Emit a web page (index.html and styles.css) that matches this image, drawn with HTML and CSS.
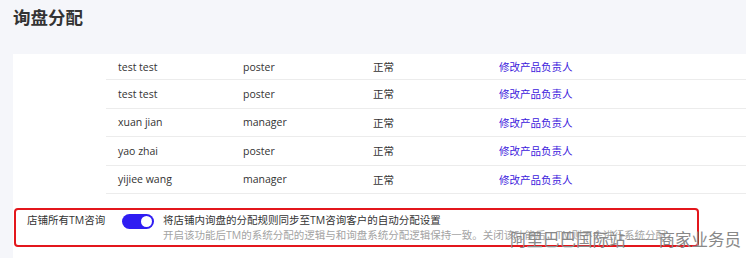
FILE: index.html
```html
<!DOCTYPE html>
<html lang="zh">
  <head>
    <meta charset="UTF-8" />
    <meta name="viewport" content="width=device-width, initial-scale=1.0" />
    <title>询盘分配</title>
    <link rel="stylesheet" href="styles.css">
  </head>
  <body>
    <div class="page">
      <h1 class="title">询盘分配</h1>
      <div class="card">
        <div class="table">
          <div class="row">
            <div class="c-name">test test</div>
            <div class="c-role">poster</div>
            <div class="c-status">正常</div>
            <div class="c-op"><a href="#">修改产品负责人</a></div>
          </div>
          <div class="row">
            <div class="c-name">test test</div>
            <div class="c-role">poster</div>
            <div class="c-status">正常</div>
            <div class="c-op"><a href="#">修改产品负责人</a></div>
          </div>
          <div class="row">
            <div class="c-name">xuan jian</div>
            <div class="c-role">manager</div>
            <div class="c-status">正常</div>
            <div class="c-op"><a href="#">修改产品负责人</a></div>
          </div>
          <div class="row">
            <div class="c-name">yao zhai</div>
            <div class="c-role">poster</div>
            <div class="c-status">正常</div>
            <div class="c-op"><a href="#">修改产品负责人</a></div>
          </div>
          <div class="row">
            <div class="c-name">yijiee wang</div>
            <div class="c-role">manager</div>
            <div class="c-status">正常</div>
            <div class="c-op"><a href="#">修改产品负责人</a></div>
          </div>
        </div>

        <div class="setting">
          <div class="setting-label">店铺所有TM咨询</div>
          <span class="switch on"><i></i></span>
          <div class="setting-text">
            <div class="main-line">将店铺内询盘的分配规则同步至TM咨询客户的自动分配设置</div>
            <div class="tip">开启该功能后TM的系统分配的逻辑与和询盘系统分配逻辑保持一致。关闭该功能后，TM则不会进行系统分配。</div>
          </div>
        </div>
      </div>
    </div>
    <div class="watermark">阿里巴巴国际站——商家业务员</div>
  </body>
</html>
```

FILE: styles.css
```css
* {
  margin: 0;
  padding: 0;
  box-sizing: border-box;
}
body {
  background: #f5f6fa;
  font-family: "Open Sans", "Noto Sans CJK SC", sans-serif;
  font-size: 10.5px;
  color: #333;
  height: 258px;
  overflow: hidden;
  position: relative;
}
.page {
  padding-left: 13px;
}
.title {
  height: 54px;
  padding-top: 4px;
  font-size: 17.5px;
  line-height: 25px;
  font-weight: bold;
  color: #333;
  font-family: "Noto Sans CJK SC", sans-serif;
}
.card {
  background: #fff;
  height: 204px;
}
.table {
  margin-left: 93px;
}
.row {
  display: flex;
  align-items: center;
  height: 28.5px;
  border-bottom: 1px solid #ececec;
}
.row:first-child {
  height: 26px;
}
.c-name {
  width: 137px;
  padding-left: 12px;
}
.c-role {
  width: 130px;
}
.c-status {
  width: 126px;
}
.c-op a {
  color: #3b20dc;
  text-decoration: none;
}

/* 设置区 */
.setting {
  display: flex;
  align-items: flex-start;
  width: 685px;
  height: 39px;
  margin: 14px 0 0 1px;
  padding: 3px 0 0 11px;
  border: 2px solid #e3171c;
  border-radius: 4px;
}
.setting-label {
  width: 95px;
  line-height: 15px;
}
.switch {
  display: block;
  width: 32px;
  height: 15px;
  border-radius: 8px;
  background: #ccc;
  position: relative;
  margin: 1px 9px 0 0;
}
.switch.on {
  background: #2f1df2;
}
.switch i {
  position: absolute;
  top: 2px;
  left: 2px;
  width: 11px;
  height: 11px;
  border-radius: 50%;
  background: #fff;
}
.switch.on i {
  left: 19px;
}
.setting-text {
  line-height: 15px;
}
.tip {
  color: #a3a3a3;
}
.watermark {
  position: absolute;
  left: 510px;
  top: 229px;
  font-family: "Noto Sans CJK SC", sans-serif;
  font-size: 16.5px;
  line-height: 20px;
  color: #888;
  white-space: nowrap;
}
```
